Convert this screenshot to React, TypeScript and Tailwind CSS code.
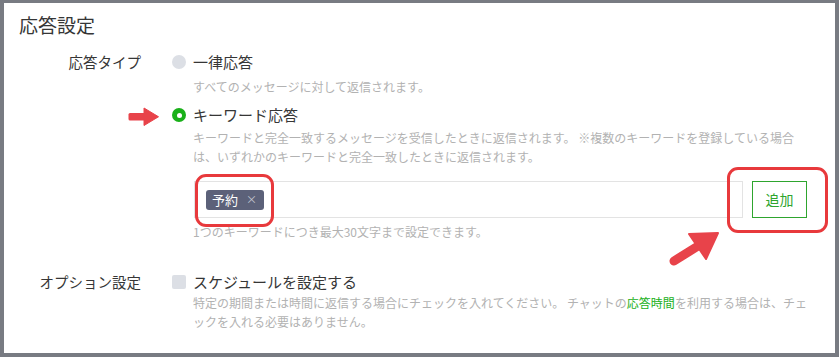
import React from "react";

// 応答設定 panel — red annotation boxes/arrows are overlays on top of the form

const font = { fontFamily: '"Noto Sans CJK JP", "Noto Sans", sans-serif' };

function Radio({ checked }: { checked?: boolean }) {
  return checked ? (
    <span className="w-[14px] h-[14px] rounded-full bg-[#19b019] flex items-center justify-center flex-shrink-0">
      <span className="w-[5px] h-[5px] rounded-full bg-white" />
    </span>
  ) : (
    <span className="w-[14px] h-[14px] rounded-full bg-[#dcdfe5] flex-shrink-0" />
  );
}

export default function App() {
  return (
    <div className="w-[839px] h-[357px] bg-[#787b82] pt-[3px] pl-[4px] pr-[4px] pb-[4px]" style={font}>
      <div className="relative w-full h-full bg-white text-[#363636]">
        {/* ── Title ── */}
        <h1 className="pl-[15px] pt-[8px] text-[19px] leading-[28px]">応答設定</h1>

        {/* ── 応答タイプ ── */}
        <div className="flex mt-[12px]">
          <div className="w-[137px] text-right text-[14.5px] leading-[22px] flex-shrink-0">応答タイプ</div>
          <div className="ml-[31px] flex-1">
            <label className="flex items-center gap-[7px] h-[22px] text-[15px]">
              <Radio />
              <span>一律応答</span>
            </label>
            <p className="pl-[21px] mt-[5px] text-[12px] leading-[18px] text-[#b2b2b2]">
              すべてのメッセージに対して返信されます。
            </p>

            <label className="flex items-center gap-[7px] h-[22px] mt-[8px] text-[15px]">
              <Radio checked />
              <span>キーワード応答</span>
            </label>
            <p className="pl-[21px] pr-[28px] mt-[2px] text-[12px] leading-[19px] text-[#b2b2b2]">
              キーワードと完全一致するメッセージを受信したときに返信されます。 ※複数のキーワードを登録している場合は、いずれかのキーワードと完全一致したときに返信されます。
            </p>

            {/* ── Keyword input + 追加 ── */}
            <div className="flex items-center ml-[22px] mt-[15px] gap-[9px]">
              <div className="relative w-[549px] h-[37px] border border-[#e3e3e3] flex items-center pl-[11px]">
                <span className="flex items-center h-[20px] rounded-[3px] bg-[#5c6179] text-white text-[13px] leading-none">
                  <span className="pl-[6px] pr-[8px]">予約</span>
                  <span className="pr-[7px] text-[11px] text-[#c3c6d0]">×</span>
                </span>
                <span className="absolute left-[0px] top-[-8px] w-[79px] h-[53px] border-[3px] border-[#e8393c] rounded-[11px]" />
              </div>
              <div className="relative">
                <button className="w-[55px] h-[37px] border border-[#2ea52e] text-[#2ea52e] text-[14px] bg-white">追加</button>
                <span className="absolute left-[-25px] top-[-14px] w-[101px] h-[66px] border-[3px] border-[#e8393c] rounded-[11px]" />
              </div>
            </div>
            <p className="ml-[21px] mt-[5px] text-[12px] leading-[18px] text-[#b2b2b2]">
              1つのキーワードにつき最大30文字まで設定できます。
            </p>
          </div>
        </div>

        {/* ── オプション設定 ── */}
        <div className="flex mt-[30px]">
          <div className="w-[137px] text-right text-[14.5px] leading-[22px] flex-shrink-0">オプション設定</div>
          <div className="ml-[31px] flex-1">
            <label className="flex items-center gap-[7px] h-[22px] text-[15px]">
              <span className="w-[14px] h-[14px] rounded-[2px] bg-[#dcdfe5] flex-shrink-0" />
              <span>スケジュールを設定する</span>
            </label>
            <p className="pl-[21px] pr-[28px] text-[12px] leading-[19px] text-[#b2b2b2]">
              特定の期間または時間に返信する場合にチェックを入れてください。 チャットの<span className="text-[#19b019]">応答時間</span>を利用する場合は、チェックを入れる必要はありません。
            </p>
          </div>
        </div>

        {/* ── Annotation arrows ── */}
        <svg className="absolute left-[124px] top-[104px]" width="31" height="19" viewBox="0 0 31 19">
          <rect x="0.5" y="6" width="18" height="7.5" rx="1.5" fill="#e8434a" />
          <polygon points="16,1 30.5,9.75 16,18.5" fill="#e8434a" stroke="#e8434a" strokeWidth="1" strokeLinejoin="round" />
        </svg>
        <svg className="absolute left-[661px] top-[220px]" width="56" height="46" viewBox="0 0 56 46">
          <line x1="9" y1="38" x2="33" y2="23" stroke="#e8434a" strokeWidth="9" strokeLinecap="round" />
          <polygon points="24,11 53,10 41,36" fill="#e8434a" stroke="#e8434a" strokeWidth="2" strokeLinejoin="round" />
        </svg>
      </div>
    </div>
  );
}
